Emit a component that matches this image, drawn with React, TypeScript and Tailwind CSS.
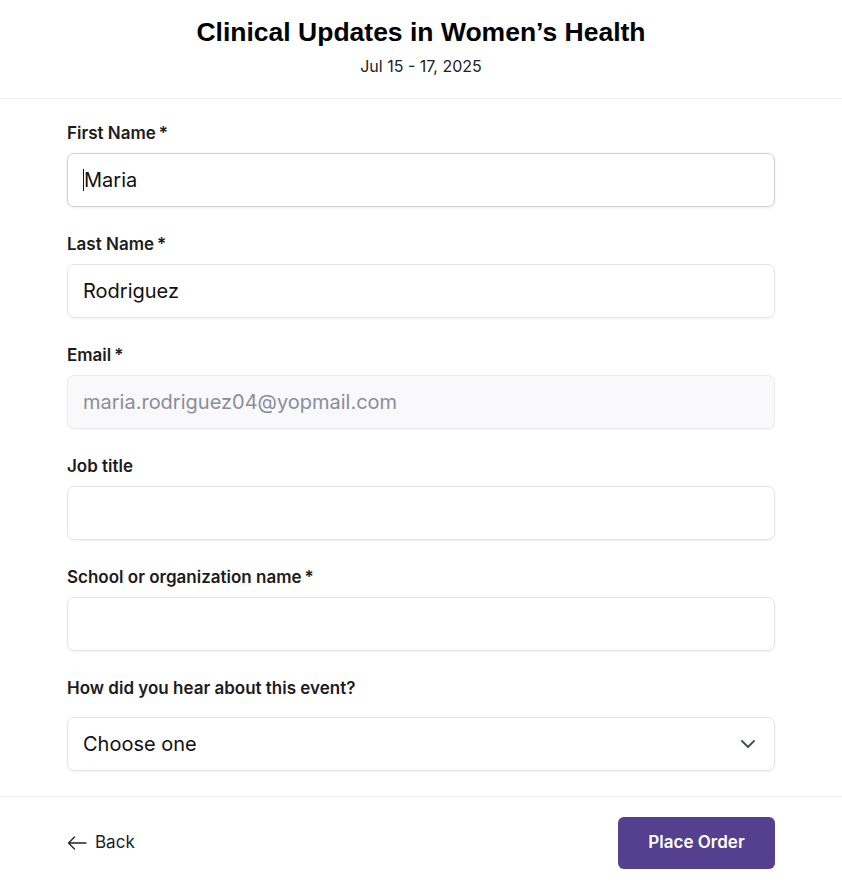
import React from "react";

const Label = ({ text, req, mb = "mb-[9px]" }: { text: string; req?: boolean; mb?: string }) => (
  <div className={`h-[21px] leading-[21px] text-[17px] font-semibold text-[#1c1c1e] ${mb}`}>
    {text}
    {req && <span className="ml-[3px]">*</span>}
  </div>
);

export default function App() {
  return (
    <div className="w-[842px] h-[888px] bg-white font-['Inter','Noto_Sans',sans-serif] text-[#1c1c1e]">
      <header className="h-[99px] border-b border-[#ececf0] flex flex-col items-center pt-[16px]">
        <h1 className="font-['Liberation_Sans','Arial',sans-serif] font-bold text-[26.5px] leading-[32px] text-black">
          Clinical Updates in Women’s Health
        </h1>
        <div className="mt-[7px] text-[16px] leading-[22px] text-[#222]">Jul 15 - 17, 2025</div>
      </header>

      <main className="px-[67px] pt-[24px] w-[842px]">
        <div className="flex flex-col gap-[27px]">
          <div>
            <Label text="First Name" req />
            <div className="h-[54px] rounded-[7px] border border-[#cfcfd4] shadow-[0_1px_3px_rgba(0,0,0,0.08)] flex items-center px-[15px] text-[20px] text-[#111]">
              <span className="w-[1px] h-[22px] bg-[#111]" />
              <span>Maria</span>
            </div>
          </div>
          <div>
            <Label text="Last Name" req />
            <div className="h-[54px] rounded-[7px] border border-[#e4e4e8] shadow-[0_1px_2px_rgba(0,0,0,0.05)] flex items-center px-[15px] text-[20px] text-[#111]">
              Rodriguez
            </div>
          </div>
          <div>
            <Label text="Email" req />
            <div className="h-[54px] rounded-[7px] border border-[#ececf0] bg-[#f9f9fb] shadow-[0_1px_2px_rgba(0,0,0,0.04)] flex items-center px-[15px] text-[20px] text-[#8a8d99]">
              maria.rodriguez04@yopmail.com
            </div>
          </div>
          <div>
            <Label text="Job title" />
            <div className="h-[54px] rounded-[7px] border border-[#e4e4e8] shadow-[0_1px_2px_rgba(0,0,0,0.05)]" />
          </div>
          <div>
            <Label text="School or organization name" req />
            <div className="h-[54px] rounded-[7px] border border-[#e4e4e8] shadow-[0_1px_2px_rgba(0,0,0,0.05)]" />
          </div>
          <div>
            <Label text="How did you hear about this event?" mb="mb-[18px]" />
            <div className="h-[54px] rounded-[7px] border border-[#e4e4e8] shadow-[0_1px_2px_rgba(0,0,0,0.05)] flex items-center justify-between pl-[15px] pr-[18px] text-[20px] text-[#111]">
              <span>Choose one</span>
              <svg width="16" height="10" viewBox="0 0 16 10" fill="none">
                <path d="M2 2l6 6 6-6" stroke="#4b5060" strokeWidth="2" strokeLinecap="round" strokeLinejoin="round" />
              </svg>
            </div>
          </div>
        </div>
      </main>

      <footer className="mt-[25px] border-t border-[#ececf0] px-[67px] pt-[20px] flex items-center justify-between">
        <div className="flex items-center gap-[8px] text-[17px] text-[#222]">
          <svg width="20" height="14" viewBox="0 0 20 14" fill="none">
            <path d="M19 7H1.5M7.5 1L1.5 7l6 6" stroke="#222" strokeWidth="1.3" strokeLinecap="round" strokeLinejoin="round" />
          </svg>
          <span>Back</span>
        </div>
        <button className="w-[157px] h-[52px] rounded-[6px] bg-[#55408f] text-white text-[17px] font-semibold">
          Place Order
        </button>
      </footer>
    </div>
  );
}
